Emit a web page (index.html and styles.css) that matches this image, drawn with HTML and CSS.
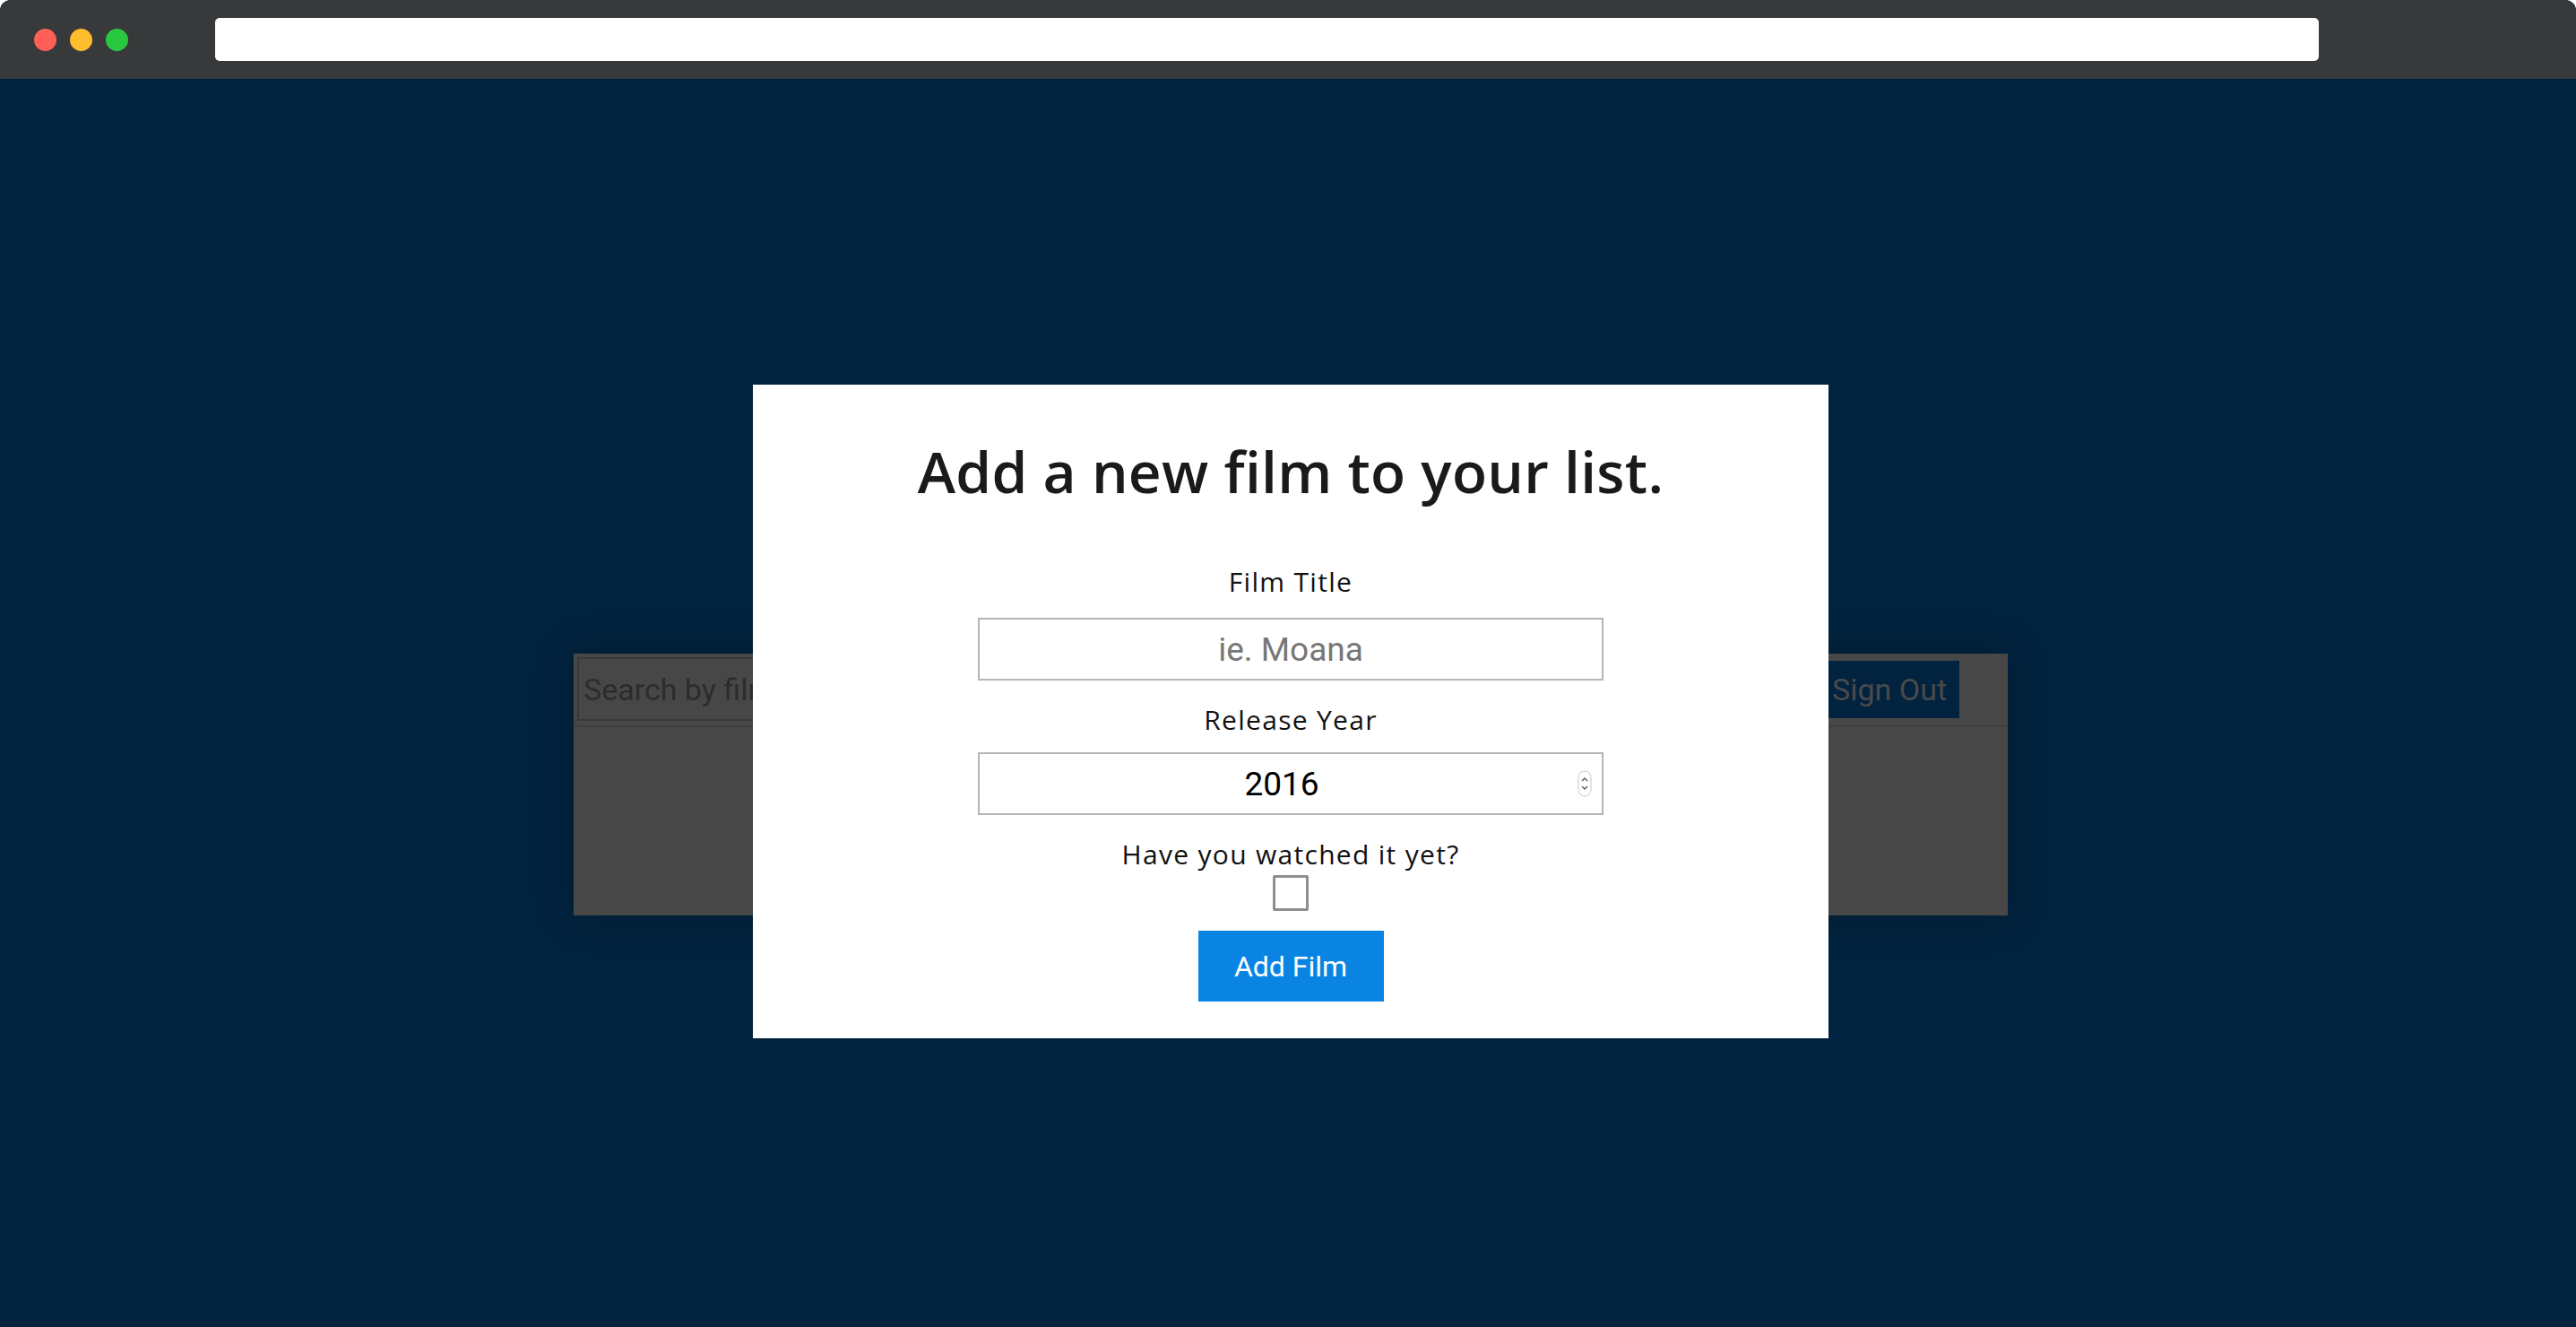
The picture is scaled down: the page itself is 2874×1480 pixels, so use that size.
FILE: index.html
```html
<!DOCTYPE html>
<html lang="en">
<head>
<meta charset="utf-8">
<title>Add a new film</title>
<link rel="stylesheet" href="styles.css">
</head>
<body>
<div class="window">
  <div class="titlebar">
    <div class="lights">
      <span class="dot red"></span>
      <span class="dot yellow"></span>
      <span class="dot green"></span>
    </div>
    <div class="url"></div>
  </div>
  <div class="stage">
    <div class="card">
      <div class="card-header">
        <input class="search" type="text" placeholder="Search by film">
        <button class="signout" type="button">Sign Out</button>
      </div>
    </div>
    <div class="overlay">
      <form class="modal">
        <h1 class="modal-title">Add a new film to your list.</h1>
        <label class="label label-first" for="title">Film Title</label>
        <input class="field" id="title" type="text" placeholder="ie. Moana">
        <label class="label" for="year">Release Year</label>
        <div class="field-wrap">
          <input class="field field-year" id="year" type="text" value="2016">
          <svg class="spinner" width="16" height="30" viewBox="0 0 16 30">
            <rect x="1" y="1" width="14" height="28" rx="7" fill="#fff" stroke="#c9c9c9" stroke-width="1"/>
            <path d="M5 12 L8 9 L11 12" fill="none" stroke="#555" stroke-width="1.3"/>
            <path d="M5 18 L8 21 L11 18" fill="none" stroke="#555" stroke-width="1.3"/>
          </svg>
        </div>
        <label class="label" for="watched">Have you watched it yet?</label>
        <input class="check" id="watched" type="checkbox">
        <button class="add" type="button">Add Film</button>
      </form>
    </div>
  </div>
</div>
</body>
</html>
```
FILE: styles.css
```css
html, body {
  margin: 0;
  padding: 0;
  background: #ffffff;
}

body {
  width: 2874px;
  height: 1480px;
  overflow: hidden;
  font-family: "Open Sans", "Noto Sans", sans-serif;
}

.window {
  width: 2874px;
  height: 1480px;
  border-radius: 12px 12px 0 0;
  overflow: hidden;
  background: #02233f;
}

.titlebar {
  height: 88px;
  background: #38393b;
  display: flex;
  align-items: center;
  padding-left: 38px;
  box-sizing: border-box;
}

.lights {
  display: flex;
  gap: 15px;
}

.dot {
  width: 25px;
  height: 25px;
  border-radius: 50%;
  display: block;
}

.red { background: #fe5f57; }
.yellow { background: #febc2e; }
.green { background: #28c840; }

.url {
  margin-left: 97px;
  width: 2347px;
  height: 48px;
  background: #ffffff;
  border-radius: 5px;
}

.stage {
  position: relative;
  height: 1392px;
  overflow: hidden;
}

.card {
  margin: 641px 0 0 640px;
  width: 1600px;
  height: 292px;
  background: #474747;
  box-shadow: 0 0 40px rgba(0, 0, 0, 0.25);
}

.card-header {
  height: 82px;
  box-sizing: border-box;
  padding: 4px 54px 0 4px;
  border-bottom: 2px solid #3e3e3e;
  display: flex;
  justify-content: space-between;
  align-items: flex-start;
}

.search {
  width: 760px;
  height: 71px;
  box-sizing: border-box;
  border: 2px solid #383838;
  background: transparent;
  padding: 0 5px;
  font-family: Roboto, "Liberation Sans", sans-serif;
  font-size: 34px;
  color: #2c2c2c;
  outline: none;
}

.search::placeholder {
  color: #2c2c2c;
}

.signout {
  margin-top: 4px;
  height: 64px;
  padding: 0 14px 0 16px;
  border: none;
  background: #02233f;
  color: #4a4a4a;
  font-family: Roboto, "Liberation Sans", sans-serif;
  font-size: 34px;
}

.overlay {
  position: absolute;
  inset: 0;
}

.modal {
  margin: 341px 0 0 840px;
  width: 1200px;
  box-sizing: border-box;
  background: #ffffff;
  padding: 57px 0 41px;
  display: flex;
  flex-direction: column;
  align-items: center;
}

.modal-title {
  margin: 0;
  font-size: 64px;
  line-height: 80px;
  font-weight: 600;
  letter-spacing: 0.3px;
  color: #1a1a1a;
}

.label {
  display: block;
  font-size: 30px;
  line-height: 40px;
  letter-spacing: 1.3px;
  color: #111111;
  margin: 24px 0 16px;
}

.label-first {
  margin: 63px 0 20px;
}

.field {
  width: 698px;
  height: 70px;
  box-sizing: border-box;
  border: 2px solid #b5b5b5;
  background: #ffffff;
  text-align: center;
  font-family: Roboto, "Liberation Sans", sans-serif;
  font-size: 37px;
  color: #000000;
  padding: 0;
  outline: none;
}

.field::placeholder {
  color: #777777;
}

.field-wrap {
  position: relative;
  width: 698px;
  height: 70px;
}

.field-year {
  padding-right: 20px;
}

.spinner {
  position: absolute;
  right: 13px;
  top: 20px;
}

.check {
  appearance: none;
  -webkit-appearance: none;
  margin: -13px 0 0;
  width: 40px;
  height: 40px;
  box-sizing: border-box;
  border: 3px solid #8e8e8e;
  border-radius: 2px;
  background: #ffffff;
}

.add {
  margin-top: 22px;
  width: 207px;
  height: 79px;
  border: none;
  background: #0984e3;
  color: #ffffff;
  font-family: Roboto, "Liberation Sans", sans-serif;
  font-size: 32px;
}
```
